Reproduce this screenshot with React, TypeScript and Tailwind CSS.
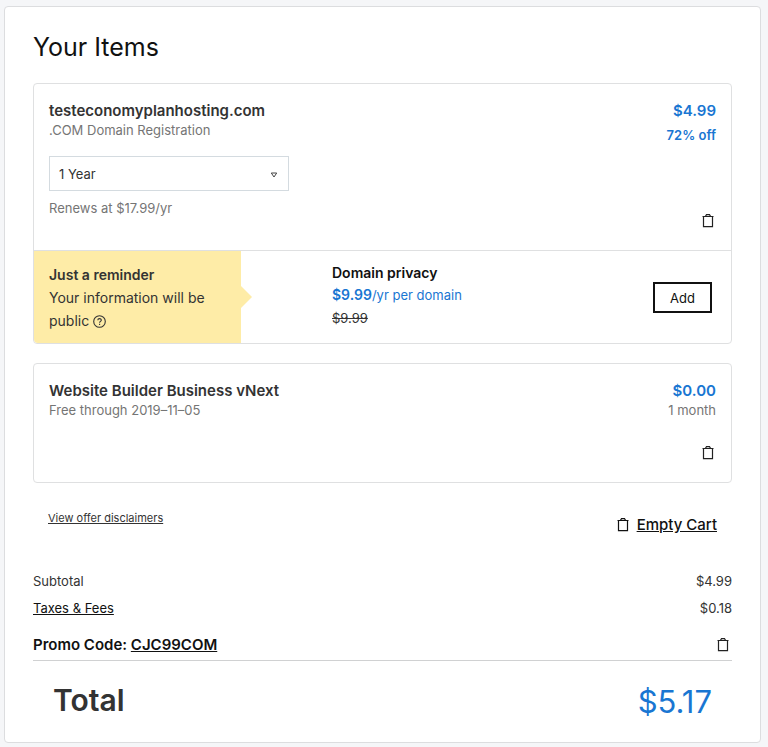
import React from "react";

function TrashIcon() {
  return (
    <svg width="12" height="14" viewBox="0 0 12 14" fill="none" stroke="currentColor" aria-hidden="true">
      <path d="M.5 2.5h11M3.5 2.2L4.5.6h3l1 1.6M1.5 2.5v10.2h9V2.5" strokeWidth="1.2" />
    </svg>
  );
}

function HelpIcon() {
  return (
    <svg width="13" height="13" viewBox="0 0 13 13" fill="none" stroke="currentColor" aria-hidden="true">
      <circle cx="6.5" cy="6.5" r="5.8" strokeWidth="1.1" />
      <path d="M4.8 5.3c0-2.2 3.5-2.2 3.5-.1 0 1.2-1.7 1.2-1.7 2.5M6.6 8.8v1.1" strokeWidth="1.1" />
    </svg>
  );
}

function RemoveButton({ label }: { label: string }) {
  return (
    <button type="button" aria-label={label} className="flex text-[#222]">
      <TrashIcon />
    </button>
  );
}

export default function App() {
  return (
    <div className="bg-[#f5f6f8] pt-[6px] pr-[7px] pb-[5px] pl-1 font-['Inter',sans-serif] text-sm text-[#333]">
      <main className="rounded border border-[#dcdddf] bg-white px-7 pt-5 pb-5">
        <h1 className="text-[25px] leading-10 text-[#111]">Your Items</h1>

        <section className="mt-4 rounded border border-[#dfe0e1]">
          <div className="flex h-[167px] justify-between border-b border-[#dfe0e1] px-[15px] pt-[17px] pb-[22px]">
            <div>
              <h2 className="text-[15px] leading-5 font-semibold">testeconomyplanhosting.com</h2>
              <p className="text-[13px] leading-[18px] text-[#757575]">.COM Domain Registration</p>
              <div className="relative mt-[17px] w-60">
                <select aria-label="Registration term" className="h-[35px] w-full appearance-none border border-[#d4dbe0] bg-white px-[9px] pt-[2px] text-[13px] text-[#333]">
                  <option>1 Year</option>
                </select>
                <svg className="pointer-events-none absolute top-4 right-3" width="6" height="6" viewBox="0 0 6 6" fill="none" stroke="#444" aria-hidden="true">
                  <path d="M.3 1h5.4L3 5z" />
                </svg>
              </div>
              <p className="mt-2 text-[13px] leading-[18px] text-[#757575]">Renews at $17.99/yr</p>
            </div>
            <div className="flex flex-col items-end text-[#1976d2]">
              <p className="text-[15px] leading-5 font-semibold">$4.99</p>
              <p className="mt-1 text-[13px] leading-5 font-semibold">72% off</p>
              <div className="mt-auto px-[2px]"><RemoveButton label="Remove domain" /></div>
            </div>
          </div>
          <div className="flex">
            <div className="relative w-[207px] rounded-bl bg-[#feeca7] px-[15px] pt-3 pb-[11px] leading-[23px]">
              <h3 className="text-sm leading-[23px] font-semibold">Just a reminder</h3>
              <p>
                Your information will be public{" "}
                <button type="button" aria-label="About public information" className="inline-flex align-[-2px]"><HelpIcon /></button>
              </p>
              <span className="absolute top-[35px] left-full border-y-[11px] border-l-[11px] border-y-transparent border-l-[#feeca7]" />
            </div>
            <div className="flex flex-1 items-center justify-between pr-[19px] pl-[91px]">
              <div className="pb-[3px] leading-[23px]">
                <h3 className="text-sm leading-[23px] font-semibold text-[#111]">Domain privacy</h3>
                <p className="text-[13px] leading-[23px] text-[#1976d2]"><strong className="text-sm font-semibold">$9.99</strong>/yr per domain</p>
                <p className="text-[13px] leading-[23px]"><s>$9.99</s></p>
              </div>
              <button type="button" className="h-[31px] w-[59px] border-2 border-[#111] pt-[2px] text-[13px] text-[#111]">Add</button>
            </div>
          </div>
        </section>

        <section className="mt-[19px] flex h-[120px] justify-between rounded border border-[#dfe0e1] px-[15px] pt-[17px] pb-[22px]">
          <div>
            <h2 className="text-[15px] leading-5 font-semibold">Website Builder Business vNext</h2>
            <p className="text-[13px] leading-[18px] text-[#757575]">Free through 2019–11–05</p>
          </div>
          <div className="flex flex-col items-end">
            <p className="text-[15px] leading-5 font-semibold text-[#1976d2]">$0.00</p>
            <p className="text-[13px] leading-[18px] text-[#757575]">1 month</p>
            <div className="mt-auto px-[2px]"><RemoveButton label="Remove website builder" /></div>
          </div>
        </section>

        <div className="mt-[26px] flex items-start justify-between px-[15px]">
          <a href="#disclaimers" className="text-[11px] leading-[18px] underline">View offer disclaimers</a>
          <button type="button" className="mt-1 flex items-center gap-2 text-[15px] leading-6 font-medium text-[#111]">
            <TrashIcon />
            <span className="underline">Empty Cart</span>
          </button>
        </div>

        <dl className="mt-[31px] text-[13px] leading-[27px]">
          <div className="flex justify-between"><dt>Subtotal</dt><dd>$4.99</dd></div>
          <div className="flex justify-between"><dt><a href="#taxes" className="text-[#111] underline">Taxes &amp; Fees</a></dt><dd>$0.18</dd></div>
        </dl>

        <div className="mt-[9px] flex items-center justify-between border-b border-[#d0d1d2] pr-[3px] pb-[1px] text-[#111]">
          <p className="text-[15px] leading-7 font-semibold">Promo Code: <a href="#promo" className="underline">CJC99COM</a></p>
          <RemoveButton label="Remove promo code" />
        </div>

        <div className="mt-[17px] flex items-center justify-between px-5">
          <p className="text-[30px] leading-[44px] font-semibold">Total</p>
          <p className="pt-1 text-[31px] leading-10 text-[#1976d2]">$5.17</p>
        </div>
      </main>
    </div>
  );
}
